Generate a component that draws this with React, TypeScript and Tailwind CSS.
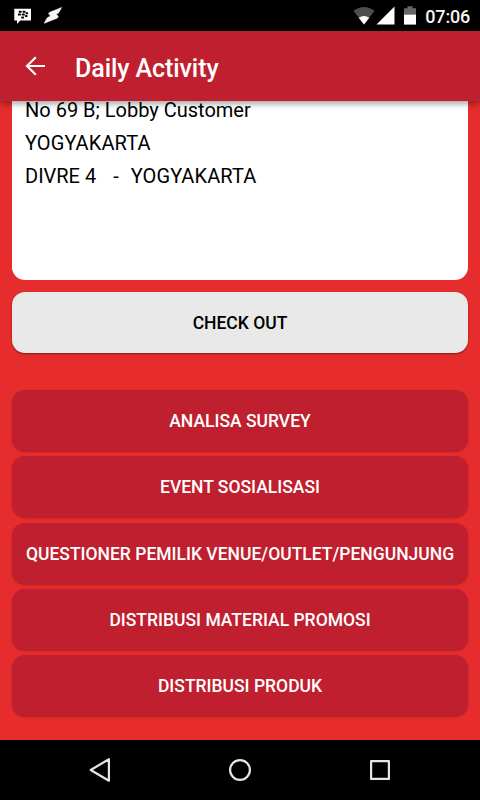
import React from 'react';

const actions = [
  { label: 'ANALISA SURVEY' },
  { label: 'EVENT SOSIALISASI' },
  { label: 'QUESTIONER PEMILIK VENUE/OUTLET/PENGUNJUNG' },
  { label: 'DISTRIBUSI MATERIAL PROMOSI' },
  { label: 'DISTRIBUSI PRODUK' },
];

function StatusBar() {
  return (
    <div className="h-[31px] shrink-0 bg-black flex items-center justify-between pl-[14px] pr-[10px]">
      <div className="flex items-center gap-[12px]">
        {/* Messenger */}
        <svg className="mt-px" width="18" height="17" viewBox="0 0 18 17">
          <path d="M0.3 0.8h16.700v11.700H6.200L3 15.900V12.500H0.300z" fill="#fff" />
          <g fill="#000">
            <rect x="4.700" y="2.700" width="3" height="2" rx="0.600" />
            <rect x="8.600" y="2.700" width="3" height="2" rx="0.600" />
            <rect x="3.900" y="5.600" width="3" height="2" rx="0.600" />
            <rect x="7.800" y="5.600" width="3" height="2" rx="0.600" />
            <rect x="11.600" y="4.200" width="2.500" height="2" rx="0.600" />
            <rect x="11" y="7.100" width="2.500" height="2" rx="0.600" />
            <rect x="7.200" y="8.600" width="2.900" height="1.900" rx="0.600" />
          </g>
        </svg>
        {/* Lightning */}
        <svg width="19" height="17" viewBox="0 0 19 17">
          <path d="M17.900 0.300L6 5Q4 6 4.700 7L6.400 9L3.800 10.200Q2.600 11 0 16.500L12.800 11.400Q15 10.300 14.200 9.100L12.400 7.300L14.400 6.300Q15.200 5.300 17.900 0.300z" fill="#f5f5f5" stroke="#f5f5f5" strokeWidth="0.300" />
        </svg>
      </div>
      <div className="flex items-center">
        {/* Wifi */}
        <svg width="22" height="19" viewBox="0 0 22 19">
          <path d="M11 18.600L0.500 4.800Q11 -2.800 21.500 4.800z" fill="#4d4d4d" />
          <path d="M11 18.600L5.700 11.700Q11 8.300 16.300 11.700z" fill="#fff" />
        </svg>
        {/* Cell signal */}
        <svg className="ml-px" width="20" height="19" viewBox="0 0 20 19">
          <path d="M0.500 18.600L18.500 0.600V18.600z" fill="#fff" />
        </svg>
        {/* Battery */}
        <svg className="ml-[8px]" width="12" height="19" viewBox="0 0 12 19">
          <path d="M0 2.300h3.500V0.300h5v2H12v6.200H0z" fill="#666" />
          <path d="M0 8.500h12v10.100H0z" fill="#fff" />
        </svg>
        <span className="ml-[9px] pt-[2px] text-[18px] leading-[29px] font-medium tracking-[-0.200px] text-[#f5f5f5]">07:06</span>
      </div>
    </div>
  );
}

function Header() {
  return (
    <header className="relative z-10 h-[70px] shrink-0 bg-[#bf1f2e] flex items-center pl-[25px] shadow-[0_3px_6px_rgba(0,0,0,0.35)]">
      <svg width="21" height="20" viewBox="0 0 21 20" fill="none" stroke="#fff" strokeWidth="2.200">
        <path d="M20 10H2M10.800 1.200L2 10L10.800 18.800" />
      </svg>
      <h1 className="ml-[29px] pt-[5px] text-[25px] leading-[34px] font-medium tracking-[-0.080px] text-white">Daily Activity</h1>
    </header>
  );
}

function NavBar() {
  return (
    <nav className="h-[60px] shrink-0 bg-black flex items-center justify-between px-[88px]">
      <svg width="24" height="26" viewBox="0 0 24 26" fill="none" stroke="#e6e6e6" strokeWidth="2.200" strokeLinejoin="round">
        <path d="M20.900 2.200V23.800L2.700 13z" />
      </svg>
      <svg width="24" height="24" viewBox="0 0 24 24" fill="none" stroke="#e6e6e6" strokeWidth="2.200">
        <circle cx="12" cy="12" r="9.900" />
      </svg>
      <svg width="24" height="24" viewBox="0 0 24 24" fill="none" stroke="#e6e6e6" strokeWidth="2.200" strokeLinejoin="round">
        <rect x="3.100" y="3.100" width="17.800" height="17.800" />
      </svg>
    </nav>
  );
}

export default function App() {
  return (
    <div className="w-[480px] h-[800px] flex flex-col overflow-hidden bg-[#e62c2c] font-['Roboto','Liberation_Sans',sans-serif]">
      <StatusBar />
      <Header />

      <main className="flex-1 min-h-0 px-[12px]">
        {/* Visit details, scrolled under the header */}
        <section className="h-[179px] rounded-b-[13px] bg-white px-[13px] text-[20px] leading-[33px] text-black">
          <div className="-translate-y-[7px] whitespace-pre">
            <p>No 69 B; Lobby Customer</p>
            <p className="tracking-[0.100px]">YOGYAKARTA</p>
            <p className="flex">
              <span>DIVRE 4</span>
              <span className="ml-[17px]">-</span>
              <span className="ml-[12px] tracking-[0.100px]">YOGYAKARTA</span>
            </p>
          </div>
        </section>

        <button className="mt-[12px] block h-[61px] w-full rounded-[13px] bg-[#e9e9e9] pt-[2px] text-[17.500px] font-medium text-black shadow-[0_1px_2px_rgba(0,0,0,0.4)]">
          CHECK OUT
        </button>

        <div className="mt-[37px] flex flex-col gap-[5.250px]">
          {actions.map((action) => (
            <button
              key={action.label}
              className="h-[61px] w-full rounded-[13px] bg-[#bf1f2e] pt-[1.500px] text-[17.500px] font-medium whitespace-nowrap text-white shadow-[0_1px_2px_rgba(0,0,0,0.25)]"
            >
              {action.label}
            </button>
          ))}
        </div>
      </main>

      <NavBar />
    </div>
  );
}
